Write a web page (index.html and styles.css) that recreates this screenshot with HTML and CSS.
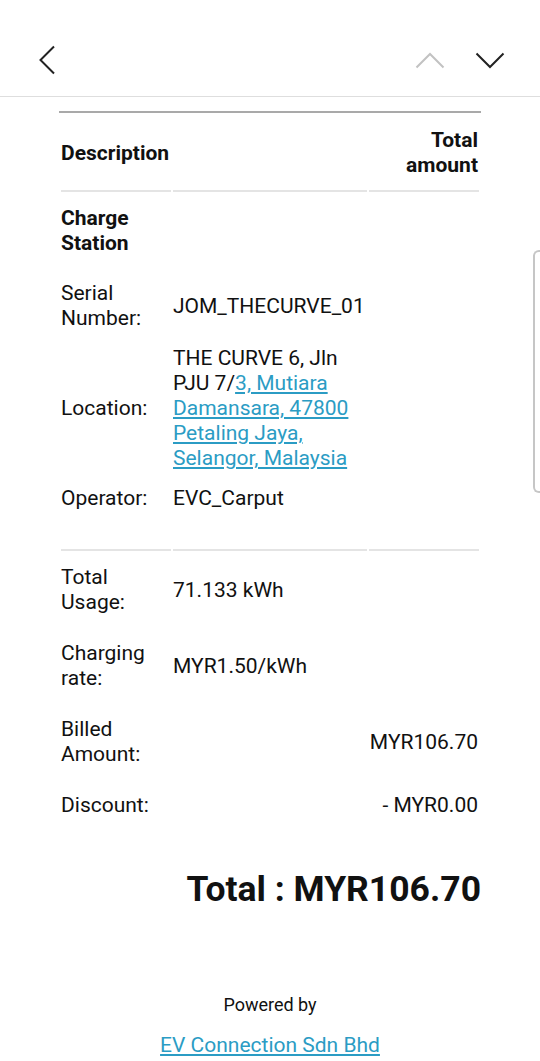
FILE: index.html
```html
<!DOCTYPE html>
<html lang="en">

<head>
  <meta charset="UTF-8">
  <meta name="viewport" content="width=device-width, initial-scale=1.0">
  <title>Receipt</title>
  <link rel="stylesheet" href="styles.css">
</head>

<body>
  <header class="topbar">
    <button class="nav-btn back" aria-label="Back">
      <svg width="18" height="30" viewBox="0 0 18 30"><polyline points="16,1.5 2.5,15 16,28.5" /></svg>
    </button>
    <div class="nav-arrows">
      <button class="nav-btn disabled" aria-label="Previous">
        <svg width="30" height="17" viewBox="0 0 30 17"><polyline points="1.5,15.5 15,2 28.5,15.5" /></svg>
      </button>
      <button class="nav-btn" aria-label="Next">
        <svg width="30" height="17" viewBox="0 0 30 17"><polyline points="1.5,1.5 15,15 28.5,1.5" /></svg>
      </button>
    </div>
  </header>

  <main class="receipt">
    <table class="invoice">
      <colgroup>
        <col class="col-label">
        <col class="col-value">
        <col class="col-amount">
      </colgroup>
      <thead>
        <tr>
          <th>Description</th>
          <th></th>
          <th class="amount">Total<br>amount</th>
        </tr>
      </thead>
      <tbody>
        <tr class="row-group">
          <td><b>Charge<br>Station</b></td>
          <td></td>
          <td></td>
        </tr>
        <tr class="row-info row-serial">
          <td>Serial<br>Number:</td>
          <td>JOM_THECURVE_01</td>
          <td></td>
        </tr>
        <tr class="row-info row-location">
          <td>Location:</td>
          <td>THE CURVE 6, Jln PJU 7/<a href="#">3, Mutiara Damansara, 47800 Petaling Jaya, Selangor, Malaysia</a></td>
          <td></td>
        </tr>
        <tr class="row-info row-last">
          <td>Operator:</td>
          <td>EVC_Carput</td>
          <td></td>
        </tr>
        <tr class="row-charge row-first">
          <td>Total<br>Usage:</td>
          <td>71.133 kWh</td>
          <td></td>
        </tr>
        <tr class="row-charge">
          <td>Charging<br>rate:</td>
          <td>MYR1.50/kWh</td>
          <td></td>
        </tr>
        <tr class="row-charge">
          <td>Billed<br>Amount:</td>
          <td></td>
          <td class="amount">MYR106.70</td>
        </tr>
        <tr class="row-charge">
          <td>Discount:</td>
          <td></td>
          <td class="amount">- MYR0.00</td>
        </tr>
      </tbody>
    </table>

    <div class="grand-total">Total : MYR106.70</div>

    <footer class="powered">
      <p>Powered by</p>
      <a href="#">EV Connection Sdn Bhd</a>
    </footer>
  </main>

  <div class="scroll-thumb"></div>
</body>

</html>
```

FILE: styles.css
```css
* {
  margin: 0;
  padding: 0;
  box-sizing: border-box;
  font-family: Roboto, "Noto Sans", sans-serif;
}

body {
  background: #fff;
  color: #111;
  width: 540px;
  height: 1061px;
  overflow: hidden;
  position: relative;
}

a {
  color: #2b9cc4;
}

/* Top bar */
.topbar {
  height: 97px;
  padding: 24px 35px 0 38px;
  display: flex;
  justify-content: space-between;
  align-items: center;
  border-bottom: 1px solid #dedede;
}

.nav-btn {
  background: none;
  border: none;
  display: flex;
}

.nav-btn svg polyline {
  fill: none;
  stroke: #222;
  stroke-width: 2;
}

.nav-btn.disabled svg polyline {
  stroke: #c2c2c2;
}

.nav-arrows {
  display: flex;
  gap: 30px;
}

/* Invoice table */
.receipt {
  width: 422px;
  margin: 0 auto;
}

.invoice {
  width: 422px;
  margin-top: 14px;
  table-layout: fixed;
  border-collapse: separate;
  border-spacing: 2px 0;
  border-top: 2px solid #a9a9a9;
  font-size: 21px;
  line-height: 25px;
}

.col-label {
  width: 110px;
}

.col-value {
  width: 194px;
}

.invoice th,
.invoice td {
  text-align: left;
  vertical-align: middle;
  padding: 8px 0;
}

.invoice .amount {
  text-align: right;
  padding-right: 1px;
}

.invoice th {
  font-weight: 700;
  padding: 15px 0 12px;
  border-bottom: 2px solid #e4e4e4;
}

.row-group td {
  padding: 14px 0 17px;
}

.row-serial td {
  padding-bottom: 7px;
}

.row-location td {
  padding-bottom: 7px;
}

.row-last td {
  padding: 8px 0 38px;
  border-bottom: 2px solid #e4e4e4;
}

.row-charge td {
  padding: 13px 0;
}

.row-first td {
  padding-top: 14px;
}

/* Grand total */
.grand-total {
  margin-top: 36px;
  text-align: right;
  font-size: 35.5px;
  line-height: 44px;
  font-weight: 700;
}

/* Footer */
.powered {
  margin-top: 82px;
  text-align: center;
}

.powered p {
  font-size: 18px;
  line-height: 24px;
}

.powered a {
  display: inline-block;
  margin-top: 15px;
  font-size: 21px;
  line-height: 26px;
}

/* Scroll indicator overlay */
.scroll-thumb {
  position: absolute;
  top: 250px;
  right: 0;
  width: 7px;
  height: 243px;
  background: #fff;
  border: 2px solid #c6c6c6;
  border-right: none;
  border-radius: 6px 0 0 6px;
}
```
